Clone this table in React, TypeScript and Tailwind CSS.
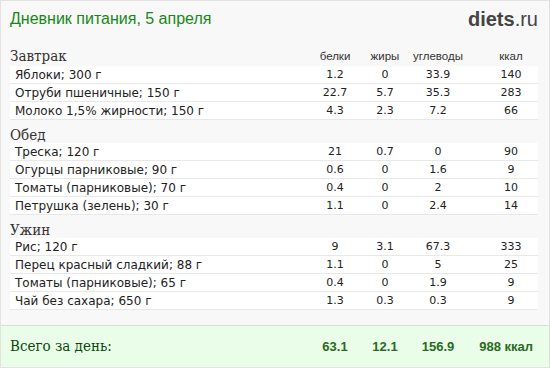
import React from 'react';

type Item = { name: string; p: string; f: string; c: string; k: string };

const MEALS: { title: string; items: Item[] }[] = [
  {
    title: 'Завтрак',
    items: [
      { name: 'Яблоки; 300 г', p: '1.2', f: '0', c: '33.9', k: '140' },
      { name: 'Отруби пшеничные; 150 г', p: '22.7', f: '5.7', c: '35.3', k: '283' },
      { name: 'Молоко 1,5% жирности; 150 г', p: '4.3', f: '2.3', c: '7.2', k: '66' },
    ],
  },
  {
    title: 'Обед',
    items: [
      { name: 'Треска; 120 г', p: '21', f: '0.7', c: '0', k: '90' },
      { name: 'Огурцы парниковые; 90 г', p: '0.6', f: '0', c: '1.6', k: '9' },
      { name: 'Томаты (парниковые); 70 г', p: '0.4', f: '0', c: '2', k: '10' },
      { name: 'Петрушка (зелень); 30 г', p: '1.1', f: '0', c: '2.4', k: '14' },
    ],
  },
  {
    title: 'Ужин',
    items: [
      { name: 'Рис; 120 г', p: '9', f: '3.1', c: '67.3', k: '333' },
      { name: 'Перец красный сладкий; 88 г', p: '1.1', f: '0', c: '5', k: '25' },
      { name: 'Томаты (парниковые); 65 г', p: '0.4', f: '0', c: '1.9', k: '9' },
      { name: 'Чай без сахара; 650 г', p: '1.3', f: '0.3', c: '0.3', k: '9' },
    ],
  },
];

const cols = 'grid grid-cols-[300px_50px_50px_56px_71px]';
const sans = "font-['DejaVu_Sans',sans-serif]";
const serif = "font-['DejaVu_Serif_Condensed','DejaVu_Serif',serif]";
const arial = "font-['Liberation_Sans',Arial,sans-serif]";

export default function App() {
  return (
    <div className="w-[550px] h-[368px] border border-[#e2e2e2] bg-[#f8f8f8] flex flex-col overflow-hidden">
      <div className="flex items-center justify-between pl-[9px] pr-[11px] h-[34px] pt-[1px]">
        <h1 className={`${arial} text-[16px] text-[#17871a]`}>Дневник питания, 5 апреля</h1>
        <div className={`${arial} text-[20px] text-[#444] leading-none`}>
          <span className="font-bold">diets</span>
          <span>.ru</span>
        </div>
      </div>

      <div className="flex-1 pl-[9px] pr-[11px]">
        {MEALS.map((meal, i) => (
          <div key={meal.title} className={i === 0 ? 'mt-[10px]' : 'mt-[4px]'}>
            <div className={`${cols} ${i === 0 ? 'h-[21px]' : 'h-[19px]'} items-center`}>
              <div className={`${serif} text-[15px] text-[#333]`}>{meal.title}</div>
              {i === 0 && (
                <>
                  <div className={`${arial} text-[11.5px] text-[#333] text-center`}>белки</div>
                  <div className={`${arial} text-[11.5px] text-[#333] text-center`}>жиры</div>
                  <div className={`${arial} text-[11.5px] text-[#333] text-center`}>углеводы</div>
                  <div className={`${arial} text-[11.5px] text-[#333] text-center pl-[19px]`}>ккал</div>
                </>
              )}
            </div>
            {meal.items.map((it) => (
              <div
                key={it.name}
                className={`${cols} ${sans} h-[18px] items-center bg-white border-b border-[#e8e8e8] text-[11px] text-[#222]`}
              >
                <div className="pl-[5px] whitespace-nowrap text-[12px]">{it.name}</div>
                <div className="text-center">{it.p}</div>
                <div className="text-center">{it.f}</div>
                <div className="text-center">{it.c}</div>
                <div className="text-center pl-[19px]">{it.k}</div>
              </div>
            ))}
          </div>
        ))}
      </div>

      <div className={`${cols} h-[42px] items-center bg-[#e9fde9] border-t border-[#dcdcdc] pl-[9px] pr-[11px] shrink-0`}>
        <div className={`${serif} text-[15px] text-[#0c4a0c]`}>Всего за день:</div>
        {['63.1', '12.1', '156.9'].map((v) => (
          <div key={v} className={`${arial} font-bold text-[13px] text-[#2b6b1f] text-center`}>
            {v}
          </div>
        ))}
        <div className={`${arial} font-bold text-[13px] text-[#2b6b1f] text-right pr-[4px]`}>988 ккал</div>
      </div>
    </div>
  );
}
